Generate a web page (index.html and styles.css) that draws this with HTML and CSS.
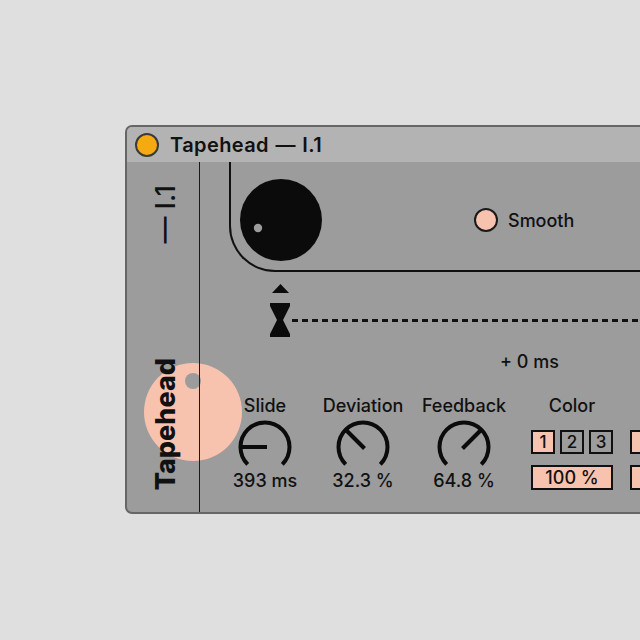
FILE: index.html
```html
<!DOCTYPE html>
<html>
<head>
<meta charset="utf-8">
<link rel="stylesheet" href="styles.css">
</head>
<body>
<div class="window">
  <div class="titlebar">
    <span class="dot"></span>
    <span class="title">Tapehead — I.1</span>
  </div>
  <div class="content">
    <div class="blob"></div>
    <div class="sidebar">
      <span class="vt vt-light">— I.1</span>
      <span class="vt vt-bold">Tapehead</span>
    </div>
    <div class="main">
      <div class="panel">
        <svg class="bigknob" width="82" height="82" viewBox="0 0 82 82">
          <circle cx="41" cy="41" r="41" fill="#0b0b0b"/>
          <circle cx="18" cy="49" r="4.2" fill="#9c9c9c"/>
        </svg>
        <span class="toggle"></span>
        <span class="toggle-label">Smooth</span>
      </div>
      <div class="delay">
        <div class="marker">
          <svg width="17" height="9" viewBox="0 0 17 9"><path d="M8.5 0 L17 9 H0 Z" fill="#0b0b0b"/></svg>
          <svg width="20" height="34" viewBox="0 0 20 34"><path d="M0 0 H20 V3 L13 17 L20 31 V34 H0 V31 L7 17 L0 3 Z" fill="#0b0b0b"/></svg>
        </div>
        <div class="dashes"></div>
      </div>
      <div class="offset">+ 0 ms</div>
      <div class="knobs">
        <div class="knob">
          <div class="label">Slide</div>
          <svg width="56" height="51" viewBox="0 0 56 51">
            <path d="M10.68 45.32 A24.5 24.5 0 1 1 45.32 45.32" fill="none" stroke="#0b0b0b" stroke-width="4"/>
            <line x1="30" y1="28" x2="4" y2="28" stroke="#0b0b0b" stroke-width="4"/>
          </svg>
          <div class="value">393 ms</div>
        </div>
        <div class="knob">
          <div class="label">Deviation</div>
          <svg width="56" height="51" viewBox="0 0 56 51">
            <path d="M10.68 45.32 A24.5 24.5 0 1 1 45.32 45.32" fill="none" stroke="#0b0b0b" stroke-width="4"/>
            <line x1="29.5" y1="29.5" x2="11" y2="11" stroke="#0b0b0b" stroke-width="4"/>
          </svg>
          <div class="value">32.3 %</div>
        </div>
        <div class="knob wide">
          <div class="label">Feedback</div>
          <svg width="56" height="51" viewBox="0 0 56 51">
            <path d="M10.68 45.32 A24.5 24.5 0 1 1 45.32 45.32" fill="none" stroke="#0b0b0b" stroke-width="4"/>
            <line x1="26.5" y1="29.5" x2="45" y2="11" stroke="#0b0b0b" stroke-width="4"/>
          </svg>
          <div class="value">64.8 %</div>
        </div>
        <div class="color">
          <div class="label">Color</div>
          <div class="boxes">
            <span class="box on">1</span>
            <span class="box">2</span>
            <span class="box">3</span>
          </div>
          <div class="wbox on">100 %</div>
        </div>
        <div class="color second">
          <div class="label">&nbsp;</div>
          <div class="boxes">
            <span class="box on full"></span>
          </div>
          <div class="wbox on"></div>
        </div>
      </div>
    </div>
  </div>
</div>
</body>
</html>
```
FILE: styles.css
```css
html, body {
  margin: 0;
  padding: 0;
}
body {
  background: #dfdfdf;
  width: 640px;
  height: 640px;
  overflow: hidden;
  font-family: Inter, "Liberation Sans", sans-serif;
  color: #111;
}
.window {
  margin: 125px 0 0 125px;
  width: 580px;
  height: 389px;
  box-sizing: border-box;
  border: 2px solid #666;
  border-radius: 7px;
  background: #9c9c9c;
  overflow: hidden;
  display: flex;
  flex-direction: column;
}
.titlebar {
  height: 35px;
  flex: none;
  background: #b3b3b3;
  display: flex;
  align-items: center;
  padding-left: 8px;
}
.dot {
  width: 24px;
  height: 24px;
  box-sizing: border-box;
  border-radius: 50%;
  background: #f6aa12;
  border: 2px solid #3a3a3a;
}
.title {
  margin-left: 11px;
  font-size: 20px;
  font-weight: 600;
  letter-spacing: 0.4px;
  word-spacing: 1px;
}
.content {
  flex: 1;
  display: flex;
  position: relative;
}
.blob {
  position: absolute;
  left: 17px;
  top: 201px;
  width: 98px;
  height: 98px;
  border-radius: 50%;
  background: #f7c3ae;
}
.blob::after {
  content: "";
  position: absolute;
  left: 41px;
  top: 10px;
  width: 16px;
  height: 16px;
  border-radius: 50%;
  background: #9c9c9c;
}
.sidebar {
  position: relative;
  z-index: 1;
  flex: none;
  width: 73px;
  box-sizing: border-box;
  border-right: 1.5px solid #1a1a1a;
  display: flex;
  flex-direction: column;
  align-items: center;
  justify-content: space-between;
  padding: 23px 0 22px 4px;
}
.vt {
  writing-mode: vertical-rl;
  transform: rotate(180deg);
  font-size: 27px;
  line-height: 27px;
  white-space: nowrap;
}
.vt-light {
  font-weight: 500;
}
.vt-bold {
  font-weight: 800;
}
.main {
  flex: 1;
  min-width: 0;
  display: flex;
  flex-direction: column;
}
.panel {
  margin-left: 29px;
  height: 110px;
  box-sizing: border-box;
  border-left: 2px solid #111;
  border-bottom: 2px solid #111;
  border-bottom-left-radius: 46px;
  display: flex;
  align-items: center;
  padding: 8px 0 0 9px;
}
.bigknob {
  flex: none;
}
.toggle {
  flex: none;
  margin-left: 152px;
  width: 24px;
  height: 24px;
  box-sizing: border-box;
  border-radius: 50%;
  border: 2px solid #1a1a1a;
  background: #f7c3ae;
}
.toggle-label {
  margin-left: 10px;
  font-size: 18px;
  font-weight: 500;
}
.delay {
  margin-top: 12px;
  display: flex;
  align-items: flex-end;
  padding-left: 70px;
}
.marker {
  flex: none;
  display: flex;
  flex-direction: column;
  align-items: center;
  gap: 10px;
  width: 20px;
}
.marker svg {
  display: block;
}
.dashes {
  flex: 1;
  height: 3px;
  margin: 0 0 15px 2px;
  background: repeating-linear-gradient(90deg, #111 0 6px, transparent 6px 10px);
}
.offset {
  margin: 14px 0 0 300px;
  font-size: 18px;
  line-height: 22px;
  font-weight: 500;
}
.knobs {
  margin-top: 22px;
  display: flex;
  padding-left: 16px;
}
.knob {
  flex: none;
  width: 98px;
  display: flex;
  flex-direction: column;
  align-items: center;
}
.knob.wide {
  width: 104px;
}
.knob svg {
  display: block;
  margin-top: 2px;
}
.label, .value {
  font-size: 18px;
  line-height: 22px;
  font-weight: 500;
  white-space: nowrap;
  text-align: center;
}
.color {
  width: 82px;
  margin-left: 15px;
  display: flex;
  flex-direction: column;
  flex: none;
}
.color.second {
  margin-left: 17px;
}
.boxes {
  margin-top: 13px;
  display: flex;
  gap: 5px;
}
.box {
  flex: none;
  width: 24px;
  height: 24px;
  box-sizing: border-box;
  border: 2px solid #111;
  font-size: 17px;
  font-weight: 500;
  line-height: 20px;
  text-align: center;
}
.box.full {
  width: 82px;
}
.on {
  background: #f7c3ae;
}
.wbox {
  margin-top: 11px;
  height: 25px;
  box-sizing: border-box;
  border: 2px solid #111;
  font-size: 18px;
  font-weight: 500;
  line-height: 21px;
  text-align: center;
}
```
